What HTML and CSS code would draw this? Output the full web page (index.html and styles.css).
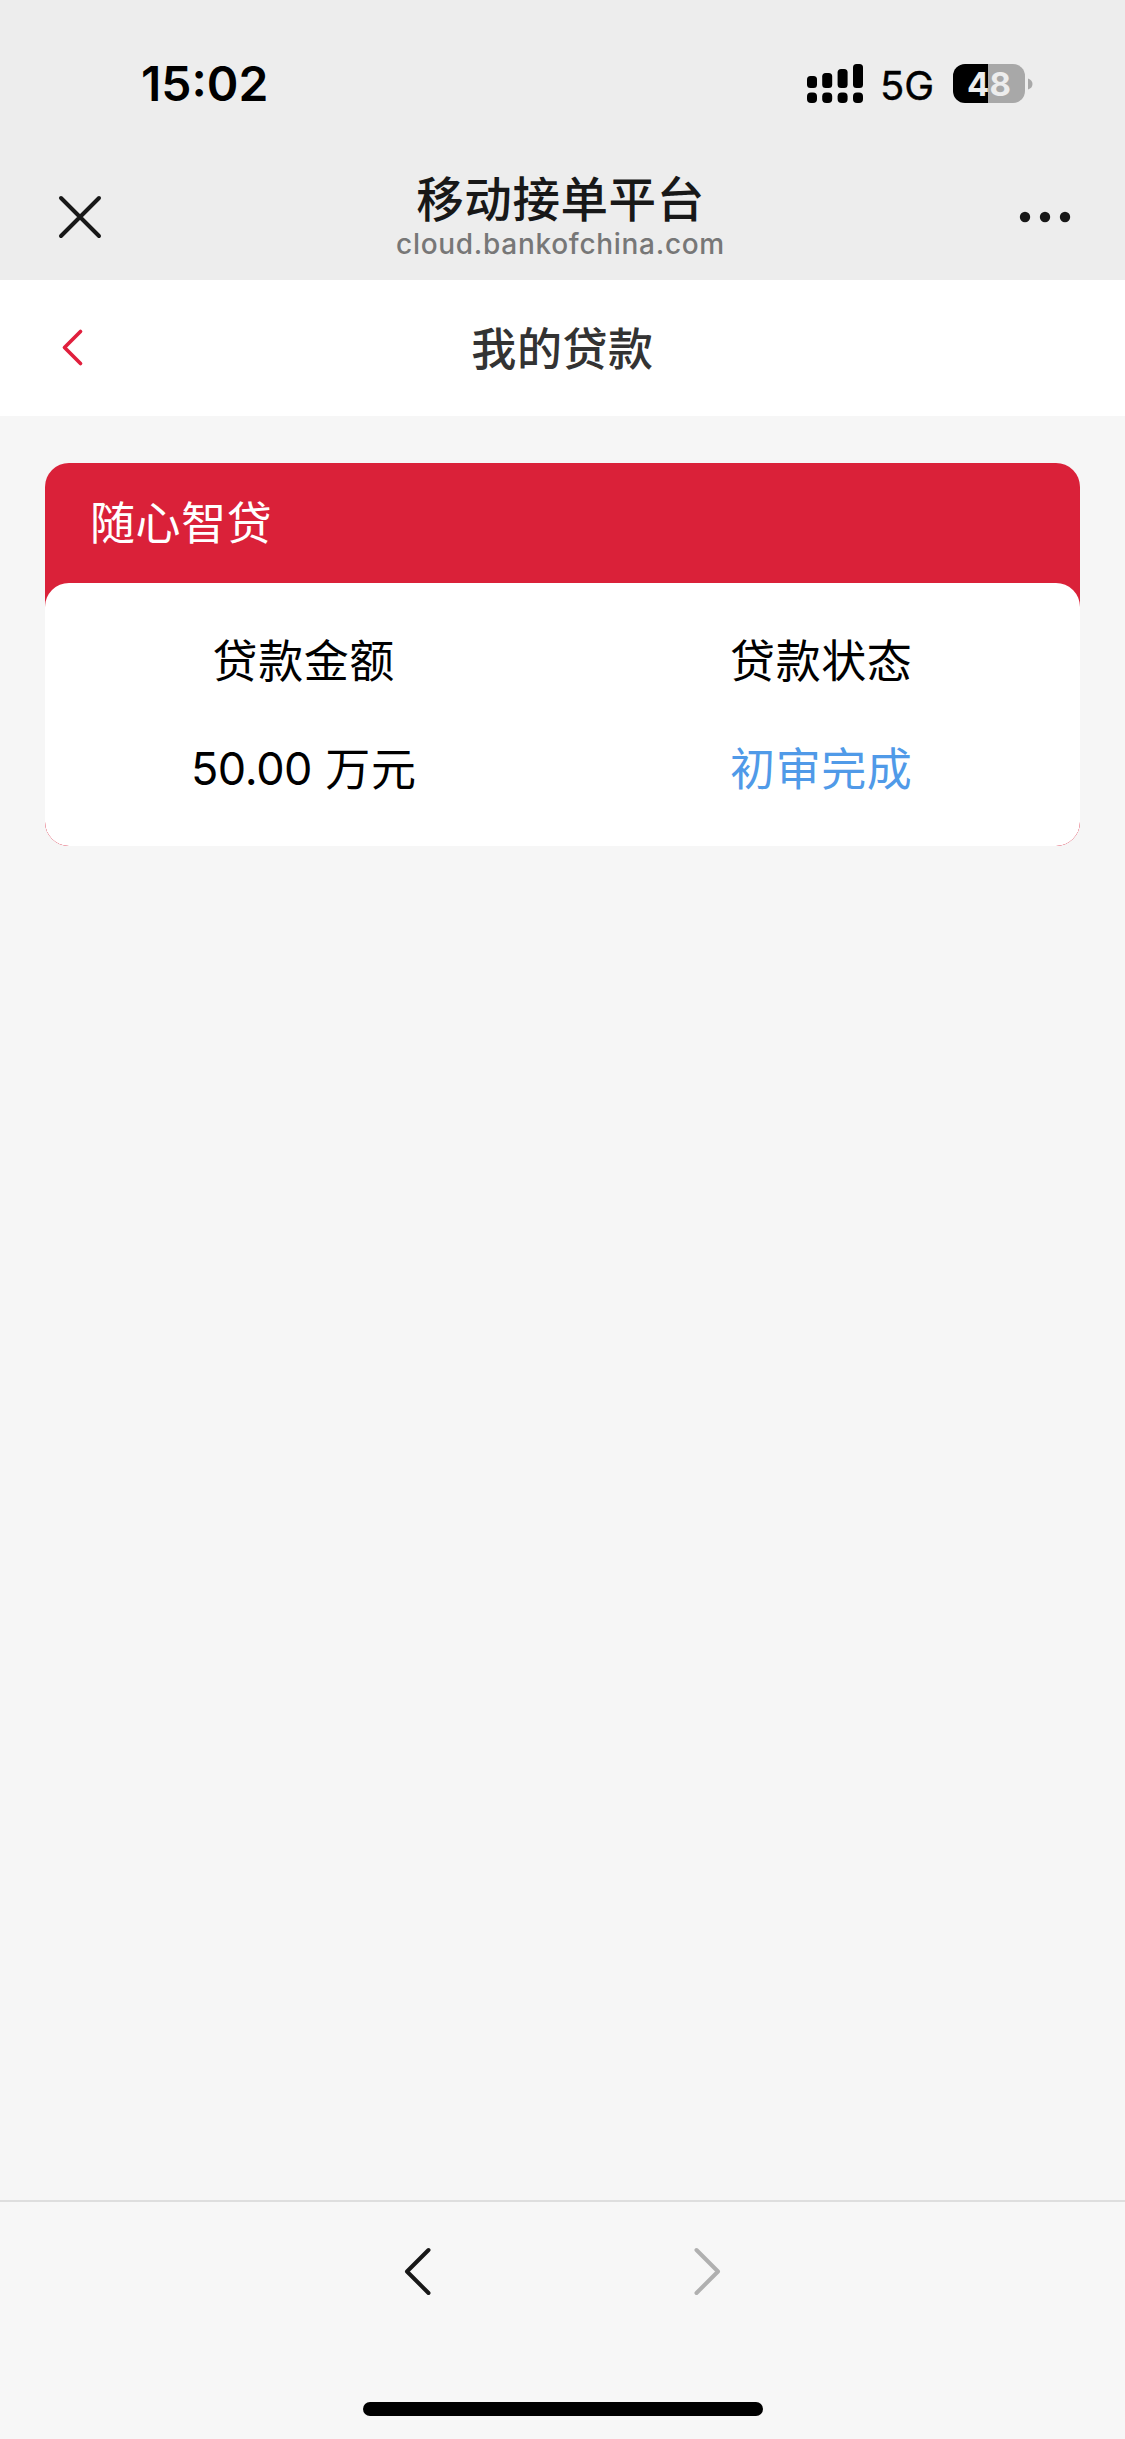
FILE: index.html
```html
<!DOCTYPE html>
<html lang="zh-CN">
<head>
<meta charset="utf-8">
<title>我的贷款</title>
<link rel="stylesheet" href="styles.css">
</head>
<body>
<div class="screen">
  <header class="browser-top">
    <div class="status-bar">
      <span class="time">15:02</span>
      <div class="status-icons">
        <svg class="signal" width="58" height="40" viewBox="0 0 58 40">
          <rect x="1" y="12" width="10" height="12" rx="3.5"/><rect x="16.2" y="9" width="10" height="15" rx="3.5"/><rect x="31.6" y="5" width="10" height="19" rx="3.5"/><rect x="47" y="0" width="10" height="24" rx="3.5"/>
          <rect x="1" y="28.5" width="10" height="10.5" rx="4"/><rect x="16.2" y="28.5" width="10" height="10.5" rx="4"/><rect x="31.6" y="28.5" width="10" height="10.5" rx="4"/><rect x="47" y="28.5" width="10" height="10.5" rx="4"/>
        </svg>
        <span class="network">5G</span>
        <div class="battery"><span class="battery-body">48</span><svg width="5" height="12" viewBox="0 0 5 12"><path d="M0 0.5Q4.500 2 4.500 6T0 11.500Z" fill="#a8a8a8"/></svg></div>
      </div>
    </div>
    <div class="title-bar">
      <svg class="close" width="44" height="44" viewBox="0 0 44 44"><path d="M3 3L41 41M41 3L3 41"/></svg>
      <div class="titles">
        <div class="site-title">移动接单平台</div>
        <div class="site-url">cloud.bankofchina.com</div>
      </div>
      <svg class="more" width="52" height="12" viewBox="0 0 52 12"><circle cx="6" cy="6" r="5.200"/><circle cx="26" cy="6" r="5.200"/><circle cx="46" cy="6" r="5.200"/></svg>
    </div>
  </header>
  <nav class="page-nav">
    <svg class="nav-back" width="24" height="40" viewBox="0 0 24 40"><path d="M20.500 3.500L4.500 19.500L20.500 35.500"/></svg>
    <h1>我的贷款</h1>
  </nav>
  <main>
    <section class="card">
      <h2>随心智贷</h2>
      <div class="details">
        <span>贷款金额</span><span>贷款状态</span>
        <span><span class="amount">50.00</span> 万元</span><span class="status">初审完成</span>
      </div>
    </section>
  </main>
  <footer>
    <div class="history">
      <svg width="32" height="52" viewBox="0 0 32 52"><path d="M26.500 4L5 25.500L26.500 47"/></svg>
      <svg class="disabled" width="32" height="52" viewBox="0 0 32 52"><path d="M5.500 4L27 25.500L5.500 47"/></svg>
    </div>
    <div class="home-indicator"></div>
  </footer>
</div>
</body>
</html>
```
FILE: styles.css
```css
* { box-sizing: border-box; }
body { margin: 0; font-family: Inter, "Noto Sans CJK SC", sans-serif; }
svg { display: block; flex: none; }
h1, h2 { margin: 0; }
.screen { width: 1125px; height: 2439px; display: flex; flex-direction: column; background: #f6f6f6; }

.browser-top { height: 280px; background: #ededed; }
.status-bar { height: 167px; padding: 0 92px 0 141px; display: flex; justify-content: space-between; align-items: center; }
.time { font-size: 48px; font-weight: 600; line-height: 60px; padding-top: 1px; }
.status-icons { display: flex; align-items: center; }
.network { margin-left: 16px; font-size: 40px; line-height: 48px; width: 73px; padding-top: 4px; -webkit-text-stroke: .4px #000; }
.battery { display: flex; align-items: center; gap: 3px; }
.battery-body { width: 72px; height: 39px; border-radius: 12px; background: linear-gradient(90deg, #000 35px, #a8a8a8 35px); color: #ededed; font-size: 33px; line-height: 40px; font-weight: 700; text-align: center; }

.title-bar { height: 113px; padding: 0 54px 0 58px; display: flex; justify-content: space-between; }
.close { margin-top: 28px; fill: none; stroke: #181818; stroke-width: 4; stroke-linecap: round; }
.more { margin-top: 44px; fill: #181818; }
.titles { text-align: center; }
.site-title { padding-top: 2px; font-size: 47.500px; font-weight: 500; line-height: 62px; letter-spacing: .6px; color: #181818; }
.site-url { font-size: 28px; font-weight: 500; line-height: 26px; letter-spacing: .7px; color: #777; }

.page-nav { height: 136px; padding: 0 60px; background: #fff; display: grid; grid-template-columns: 24px 1fr 24px; align-items: center; }
.nav-back { fill: none; stroke: #e01f3d; stroke-width: 3.7; stroke-linecap: round; stroke-linejoin: round; }
.page-nav h1 { padding-top: 4px; text-align: center; font-size: 45px; font-weight: 500; letter-spacing: .6px; line-height: 64px; color: #333; }

main { flex: 1; padding: 47px 45px; }
.card { height: 383px; border-radius: 24px; overflow: hidden; background: #da2139; }
.card h2 { height: 120px; padding-left: 45px; color: #fff; font-size: 45px; line-height: 121px; font-weight: 400; letter-spacing: .6px; }
.details { height: 263px; padding-top: 25px; border-radius: 24px; background: #fff; display: grid; grid-template-columns: 1fr 1fr; grid-auto-rows: 108px; text-align: center; font-size: 45px; line-height: 108px; letter-spacing: .6px; color: #000; }
.details .amount { position: relative; top: -1px; letter-spacing: -.4px; }
.details .status { color: #509ae8; }

footer { height: 239px; border-top: 2px solid #dedede; background: #f7f7f7; display: flex; flex-direction: column; align-items: center; }
.history { width: 1125px; padding: 44px 402px 0; display: flex; justify-content: space-between; fill: none; stroke: #181818; stroke-width: 4; stroke-linecap: round; stroke-linejoin: round; }
.history .disabled { stroke: #b0b0b0; }
.home-indicator { width: 400px; height: 14px; margin-top: 104px; border-radius: 7px; background: #000; }
```
